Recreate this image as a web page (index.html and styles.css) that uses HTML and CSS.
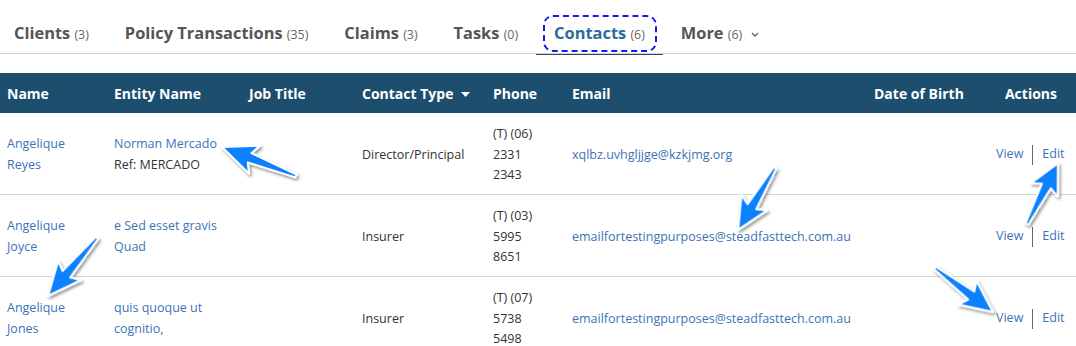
FILE: index.html
```html
<!DOCTYPE html>
<html lang="en">
<head>
    <meta charset="UTF-8">
    <meta name="viewport" content="width=device-width, initial-scale=1.0">
    <title>Contacts</title>
    <link rel="stylesheet" href="styles.css">
</head>
<body>

<div class="page">
    <nav class="tabs">
        <a class="tab">Clients <span class="count">(3)</span></a>
        <a class="tab">Policy Transactions <span class="count">(35)</span></a>
        <a class="tab">Claims <span class="count">(3)</span></a>
        <a class="tab">Tasks <span class="count">(0)</span></a>
        <a class="tab active"><span class="focus">Contacts <span class="count">(6)</span></span></a>
        <a class="tab">More <span class="count">(6)</span>
            <svg class="chev" width="8" height="5" viewBox="0 0 8 5"><path d="M1 1l3 3 3-3" fill="none" stroke="#666" stroke-width="1.4"/></svg>
        </a>
    </nav>

    <table class="contacts">
        <colgroup>
            <col style="width:107px">
            <col style="width:135px">
            <col style="width:113px">
            <col style="width:131px">
            <col style="width:79px">
            <col style="width:302px">
            <col style="width:129px">
            <col style="width:80px">
        </colgroup>
        <thead>
            <tr>
                <th>Name</th>
                <th>Entity Name</th>
                <th>Job Title</th>
                <th>Contact Type <svg class="caret" width="9" height="5" viewBox="0 0 9 5"><path d="M0 0h9L4.5 5z" fill="#fff"/></svg></th>
                <th>Phone</th>
                <th>Email</th>
                <th>Date of Birth</th>
                <th class="th-actions">Actions</th>
            </tr>
        </thead>
        <tbody>
            <tr>
                <td><a class="link">Angelique<br>Reyes</a></td>
                <td><a class="link">Norman Mercado</a><br>Ref: MERCADO</td>
                <td></td>
                <td>Director/Principal</td>
                <td>(T) (06)<br>2331<br>2343</td>
                <td><a class="link">xqlbz.uvhgljjge@kzkjmg.org</a></td>
                <td></td>
                <td class="actions"><a class="link">View</a><span class="sep"></span><a class="link">Edit</a></td>
            </tr>
            <tr>
                <td><a class="link">Angelique<br>Joyce</a></td>
                <td><a class="link">e Sed esset gravis<br>Quad</a></td>
                <td></td>
                <td>Insurer</td>
                <td>(T) (03)<br>5995<br>8651</td>
                <td><a class="link">emailfortestingpurposes@steadfasttech.com.au</a></td>
                <td></td>
                <td class="actions"><a class="link">View</a><span class="sep"></span><a class="link">Edit</a></td>
            </tr>
            <tr>
                <td><a class="link">Angelique<br>Jones</a></td>
                <td><a class="link">quis quoque ut<br>cognitio,</a></td>
                <td></td>
                <td>Insurer</td>
                <td>(T) (07)<br>5738<br>5498</td>
                <td><a class="link">emailfortestingpurposes@steadfasttech.com.au</a></td>
                <td></td>
                <td class="actions"><a class="link">View</a><span class="sep"></span><a class="link">Edit</a></td>
            </tr>
        </tbody>
    </table>

    <!-- annotation arrows drawn over the table -->
    <svg class="arrows" width="1076" height="346" viewBox="0 0 1076 346">
        <defs>
            <filter id="shadow" x="-30%" y="-30%" width="160%" height="160%">
                <feDropShadow dx="1.5" dy="2" stdDeviation="1.8" flood-color="#000" flood-opacity="0.45"/>
            </filter>
            <polygon id="arrow" points="75,0 42,-15 47,-5 0,-1.5 0,1.5 47,5 42,15"/>
        </defs>
        <g fill="#0a80fb" stroke="#fff" stroke-width="2" stroke-linejoin="round" filter="url(#shadow)">
            <use href="#arrow" transform="translate(296 176) rotate(201.4) scale(1.06 1)"/>
            <use href="#arrow" transform="translate(775 168) rotate(120.8) scale(0.96 1)"/>
            <use href="#arrow" transform="translate(1027 224) rotate(-63) scale(0.91 1)"/>
            <use href="#arrow" transform="translate(97 238) rotate(130.2) scale(1.01 1)"/>
            <use href="#arrow" transform="translate(935 268) rotate(37.2) scale(0.97 1)"/>
        </g>
    </svg>
</div>

</body>
</html>
```

FILE: styles.css
```css
* {
    box-sizing: border-box;
    margin: 0;
    padding: 0;
}

body {
    font-family: "Open Sans", "Liberation Sans", sans-serif;
    background: #fff;
    color: #333;
    overflow: hidden;
}

.page {
    position: relative;
    width: 1076px;
}

/* tabs */

.tabs {
    display: flex;
    height: 54px;
    margin-left: -4px;
    border-bottom: 1px solid #d2d2d2;
}

.tab {
    position: relative;
    padding: 21px 18px 0;
    font-size: 16.4px;
    line-height: 24px;
    font-weight: 700;
    color: #555;
    white-space: nowrap;
}

.tab .count {
    font-size: 12.4px;
    font-weight: 400;
    color: #666;
}

.tab.active {
    color: #2b6c9b;
}

.tab.active::after {
    content: "";
    position: absolute;
    left: 0;
    right: 0;
    bottom: -2px;
    height: 1.5px;
    background: #1d4e6e;
}

.focus {
    display: inline-block;
    padding: 4px 10px 3px 9px;
    margin: -4px -10px -3px -9px;
    outline: 2px dashed #1717f5;
    border-radius: 8px;
}

.chev {
    margin-left: 4px;
    vertical-align: 2px;
}

/* table */

.contacts {
    margin-top: 19px;
    width: 100%;
    border-collapse: collapse;
    table-layout: fixed;
}

.contacts th {
    height: 40px;
    padding: 0 7px;
    background: #1d4e6e;
    color: #fff;
    font-size: 14px;
    font-weight: 700;
    text-align: left;
    white-space: nowrap;
}

.contacts th.th-actions {
    text-align: right;
    padding-right: 19px;
}

.caret {
    margin-left: 4px;
    vertical-align: 2px;
}

.contacts td {
    padding: 11px 7px 8.5px;
    font-size: 12.5px;
    line-height: 20.5px;
    color: #333;
    vertical-align: middle;
    border-bottom: 1px solid #d6d6d6;
    white-space: nowrap;
}

.link {
    color: #3c73b6;
    text-decoration: none;
}

.contacts td.actions {
    text-align: right;
    padding-left: 0;
    padding-right: 12px;
}

.sep {
    display: inline-block;
    width: 1px;
    height: 20px;
    margin: 0 9px;
    background: #666;
    vertical-align: middle;
}

.arrows {
    position: absolute;
    top: 0;
    left: 0;
    pointer-events: none;
}
```
